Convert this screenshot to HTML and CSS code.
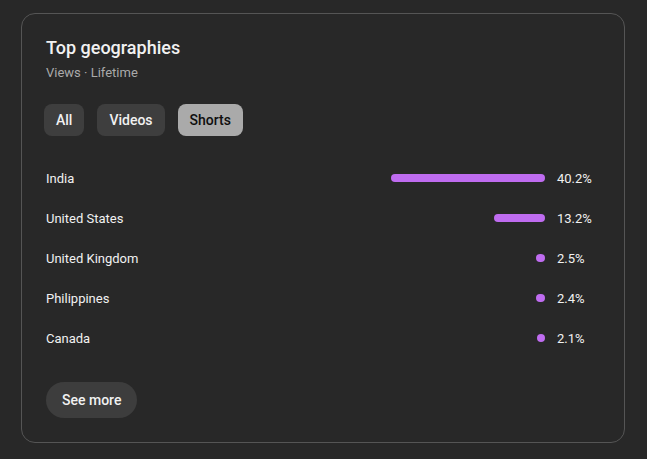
FILE: index.html
```html
<!DOCTYPE html>
<html>
<head>
<meta charset="utf-8">
<link rel="stylesheet" href="styles.css">
</head>
<body>
<div class="card">
  <h2 class="title">Top geographies</h2>
  <div class="subtitle">Views · Lifetime</div>
  <div class="chips">
    <button class="chip">All</button>
    <button class="chip">Videos</button>
    <button class="chip chip-active">Shorts</button>
  </div>
  <div class="rows">
    <div class="row"><span class="name">India</span><span class="bar-wrap"><span class="bar" style="width:154px"></span></span><span class="pct">40.2%</span></div>
    <div class="row"><span class="name">United States</span><span class="bar-wrap"><span class="bar" style="width:51px"></span></span><span class="pct">13.2%</span></div>
    <div class="row"><span class="name">United Kingdom</span><span class="bar-wrap"><span class="bar" style="width:9px"></span></span><span class="pct">2.5%</span></div>
    <div class="row"><span class="name">Philippines</span><span class="bar-wrap"><span class="bar" style="width:9px"></span></span><span class="pct">2.4%</span></div>
    <div class="row"><span class="name">Canada</span><span class="bar-wrap"><span class="bar" style="width:8px"></span></span><span class="pct">2.1%</span></div>
  </div>
  <button class="more">See more</button>
</div>
</body>
</html>
```
FILE: styles.css
```css
html, body {
  margin: 0;
  padding: 0;
  background: #282828;
}
body {
  padding: 13px 0 0 21px;
  font-family: Roboto, "Liberation Sans", sans-serif;
  color: #f1f1f1;
}
.card {
  box-sizing: border-box;
  width: 604px;
  height: 430px;
  border: 1px solid #555;
  border-radius: 14px;
  padding: 22px 24px 23px 24px;
  display: flex;
  flex-direction: column;
}
.title {
  margin: 0;
  font-size: 18px;
  font-weight: 500;
  line-height: 24px;
  color: #f1f1f1;
}
.subtitle {
  margin-top: 4px;
  font-size: 13px;
  line-height: 18px;
  color: #aaa;
}
.chips {
  display: flex;
  gap: 13px;
  margin: 22px 0 0 -2px;
}
.chip {
  font-family: inherit;
  font-size: 14px;
  font-weight: 500;
  height: 32px;
  padding: 0 12px;
  border: none;
  border-radius: 8px;
  background: #3e3e3e;
  color: #f1f1f1;
}
.chip-active {
  background: #aaaaaa;
  color: #0f0f0f;
}
.rows {
  margin-top: 22px;
  display: flex;
  flex-direction: column;
}
.row {
  height: 40px;
  display: flex;
  align-items: center;
  font-size: 13px;
}
.name {
  flex: 1;
}
.bar-wrap {
  display: flex;
  justify-content: flex-end;
}
.bar {
  display: block;
  height: 8px;
  border-radius: 4px;
  background: #bf6cf0;
}
.pct {
  width: 43px;
  margin-left: 12px;
  color: #f1f1f1;
}
.more {
  margin-top: 24px;
  align-self: flex-start;
  height: 36px;
  padding: 0 16px;
  border: none;
  border-radius: 18px;
  background: #3d3d3d;
  color: #f1f1f1;
  font-family: inherit;
  font-size: 14px;
  font-weight: 500;
}
```
